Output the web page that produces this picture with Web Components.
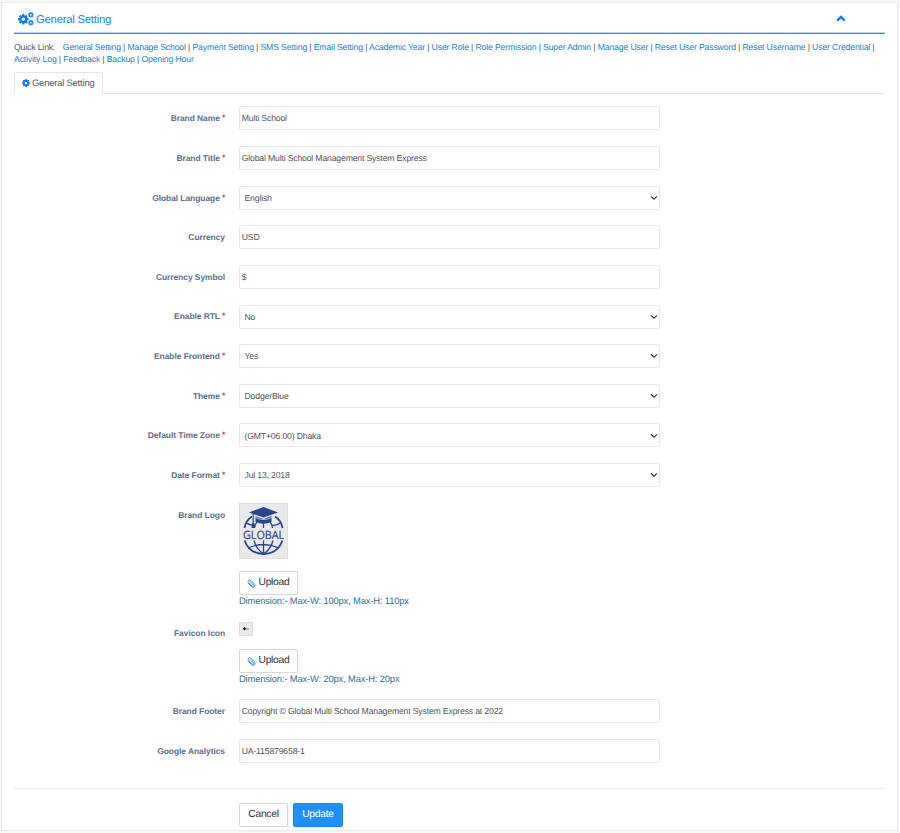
<!DOCTYPE html>
<html lang="en">
<head>
<meta charset="utf-8">
<title>General Setting</title>
<style>
html,body{margin:0;height:833px;overflow:hidden;background:#f7f7f7}
body{font-family:"Liberation Sans",Arial,sans-serif;font-size:8.700px;letter-spacing:-.18px;color:#555;text-rendering:geometricPrecision;box-sizing:border-box;padding:2px 2px 2px 1px}
</style>
</head>
<body>
<settings-page></settings-page>
<script>
const COG = 'M1152 896q0-106-75-181t-181-75-181 75-75 181 75 181 181 75 181-75 75-181zm512-109v222q0 12-8 23t-20 13l-185 28q-19 54-39 91 35 50 107 138 10 12 10 25t-9 23q-27 37-99 108t-94 71q-12 0-26-9l-138-108q-44 23-91 38-16 136-29 186-7 28-36 28h-222q-14 0-24.500-8.500t-11.500-21.500l-28-184q-49-16-90-37l-141 107q-10 9-25 9-14 0-25-11-126-114-165-168-7-10-7-23 0-12 8-23 15-21 51-66.500t54-70.500q-27-50-41-99l-183-27q-13-2-21-12.500t-8-23.500v-222q0-12 8-23t19-13l186-28q14-46 39-92-40-57-107-138-10-12-10-24 0-10 9-23 26-36 98.500-107.500t94.500-71.500q13 0 26 10l138 107q44-23 91-38 16-136 29-186 7-28 36-28h222q14 0 24.500 8.500t11.500 21.500l28 184q49 16 90 37l142-107q9-9 24-9 13 0 25 10 129 119 165 170 7 8 7 22 0 12-8 23-15 21-51 66.500t-54 70.500q26 50 41 98l183 28q13 2 21 12.500t8 23.500z';
const cogAt = (x, y, size) => `<path transform="translate(${x} ${y}) scale(${size / 1536}) translate(-128 -128)" d="${COG}"/>`;
const ICONS = {
  cog: [8, 8, `<g fill="#007bff">${cogAt(0, 0, 8)}</g>`],
  cogs: [16, 15, `<g fill="#007bff">${cogAt(0, 2, 10.6)}${cogAt(10, 0, 5.600)}${cogAt(10, 7.9, 5.600)}</g>`],
  up: [10, 7, '<path d="M1.2 5.6 5 1.9l3.8 3.7" fill="none" stroke="#007bff" stroke-width="2.2"/>'],
  down: [8, 6, '<path d="M1.1 1.400 4 4.200l2.900-2.800" fill="none" stroke="#333" stroke-width="1.25"/>'],
  clip: [9, 9, '<path d="M1.100 4.200 4.900 7.900Q6.200 9 7.500 7.800 8.700 6.500 7.600 5.200L3.700 1.200Q2.600.2 1.500 1.200.500 2.300 1.500 3.400L5.400 7.200Q6.100 7.700 6.600 7.200 7.100 6.600 6.500 6L3.200 2.700" fill="none" stroke="#2c80ff" stroke-width=".9" stroke-linecap="round"/>']
};
function define(name, css, html) {
  customElements.define(name, class extends HTMLElement {
    constructor() {
      super();
      this.attachShadow({ mode: 'open' }).innerHTML =
        `<style>${css}</style>` + (typeof html === 'function' ? html(this) : html);
    }
  });
}

define('ui-icon', ':host{display:inline-flex;flex:none}svg{display:block}', el => {
  const [w, h, body] = ICONS[el.getAttribute('name')];
  return `<svg width="${w}" height="${h}" viewBox="0 0 ${w} ${h}">${body}</svg>`;
});

define('panel-header', `
  :host{display:flex;align-items:center;height:31px;box-sizing:border-box;padding:3px 39px 0 4px;border-bottom:1px solid #1e8cff;box-shadow:inset 0 -1px #b5d9ff}
  h1{flex:1;margin:0 0 0 2px;font-size:11.300px;letter-spacing:-.23px;font-weight:400;color:#1a82fb;line-height:14px}
  .up{margin-top:-3px}`,
  '<ui-icon name="cogs"></ui-icon><h1><slot></slot></h1><ui-icon class="up" name="up"></ui-icon>');

define('quick-links', `
  :host{display:block;line-height:12.400px;padding-top:6.500px;font-size:8.700px;letter-spacing:-.155px;height:24.800px;color:#555}
  a{color:#1c7fc4}span{margin-right:7.500px}div{white-space:nowrap}`,
  el => {
    const line = s => s.split(',').map(t => `<a>${t}</a>`).join(' | ');
    return `<div><span>Quick Link:</span>${line(el.getAttribute('first'))} |</div><div>${line(el.getAttribute('second'))}</div>`;
  });

define('tab-bar', `
  :host{display:flex;height:22px;margin-top:6.700px;border-bottom:1px solid #e6e6e6;box-sizing:border-box}
  div{display:flex;align-items:center;gap:2px;box-sizing:border-box;width:89px;height:22px;padding:0 0 1px 7px;border:1px solid #e6e6e6;border-bottom:0;border-radius:3px 3px 0 0;background:#fff;font-size:9.400px;white-space:nowrap;color:#555}`,
  '<div><ui-icon name="cog"></ui-icon><slot></slot></div>');

define('form-row', `
  :host{display:grid;grid-template-columns:211px 421px;column-gap:14px;height:39.630px}
  label{font-weight:700;font-size:8.450px;letter-spacing:-.05px;color:#5b708b;text-align:right;line-height:12px;padding-top:var(--label-top,5.900px);white-space:nowrap}
  b{color:#f00;font-size:7.500px;font-weight:400;-webkit-text-stroke:.2px;display:inline-block;line-height:8px;transform:translateY(-1px)}`,
  el => `<label>${el.getAttribute('label')}${el.hasAttribute('required') ? ' <b>*</b>' : ''}</label><div><slot></slot></div>`);

define('text-field', `
  :host{display:flex;align-items:center;height:24px;box-sizing:border-box;border:1px solid #e8e8e8;border-radius:1.500px;padding:0 1.700px;color:#555;white-space:nowrap}`,
  '<slot></slot>');

define('select-field', `
  :host{display:flex;align-items:center;justify-content:space-between;height:24px;box-sizing:border-box;border:1px solid #e8e8e8;border-radius:1.500px;padding:.500px 1px 0 4.500px;color:#555;white-space:nowrap}`,
  '<span><slot></slot></span><ui-icon name="down"></ui-icon>');

define('ui-button', `
  :host{display:inline-flex;align-items:center;justify-content:center;gap:2px;width:var(--w,59px);height:24px;box-sizing:border-box;border:1px solid #d8d8d8;border-radius:2px;background:#fff;color:#333;font-size:10.300px;letter-spacing:-.27px;line-height:12px}
  :host([primary]){background:#1e90ff;border-color:#1e86ee;color:#fff}`,
  '<slot></slot>');

define('upload-hint', ':host{display:block;color:#35708e;font-size:9.350px;letter-spacing:-.14px;line-height:12px;margin-top:-.500px;white-space:nowrap}', '<slot></slot>');

define('brand-logo', ':host{display:block;width:49px;height:56px}svg{display:block}', `
  <svg width="49" height="56" viewBox="0 0 49 56">
    <rect x=".5" y=".5" width="48" height="55" fill="#e9e9e9" stroke="#dfdfdf"/>
    <g fill="none" stroke="#27468f" stroke-width="1.300">
      <path d="M5.500 25Q7 17 13 13.500M43.500 25Q42 17 36 13.500M5.600 37.500Q10 50.500 24.500 51 39 50.500 43.400 37.500" stroke-width="1.800"/>
      <path d="M24.500 19V25M24.500 37.500V51M15.500 25Q16 21 18 19M33.500 25Q33 21 31 19M15 37.500Q17 46 24.500 51 32 46 34 37.500M9 45Q24.500 38 40 45M8 20Q10 22 16 22.500M41 20Q39 22 33 22.500"/>
    </g>
    <path d="M10 9.500 24.500 4 39 9.500 24.500 14.500Z" fill="#27468f"/>
    <path d="M16.500 13.200 24.500 16 32.500 13V19Q24.500 22.500 16.500 19Z" fill="#27468f"/>
    <path d="M16.500 14.500Q24.500 18.500 32.500 14.500" fill="none" stroke="#e9e9e9" stroke-width=".8"/>
    <path d="M14.200 11V23.500" stroke="#27468f" stroke-width="1.200"/>
    <path d="M12.500 25 13.200 20h2l.7 5z" fill="#27468f"/>
    <text x="24.500" y="35.500" text-anchor="middle" textLength="41" lengthAdjust="spacingAndGlyphs" font-family="Open Sans, sans-serif" font-size="11.500" letter-spacing="0" fill="#27468f" stroke="#27468f" stroke-width=".2">GLOBAL</text>
  </svg>`);

define('favicon-preview', ':host{display:block;width:14px;height:14px}svg{display:block}', `
  <svg width="14" height="14" viewBox="0 0 14 14"><rect x=".5" y=".5" width="13" height="13" fill="#e9e9e9" stroke="#dedede"/><path d="m3.800 6.800 1.700-1.700 1.700 1.700-1.700 1.700z" fill="#111"/><path d="M7 7h3" stroke="#777" stroke-width=".8"/></svg>`);

define('settings-page', `
  :host{display:block;height:829px;box-sizing:border-box;background:#fff;border:1px solid #ebebeb;padding:0 12px}
  form{display:block;padding-top:12.400px}
  .logo{height:119px;--label-top:6px}
  .fav{height:77.500px;--label-top:5.600px}
  .logo ui-button{margin-top:12.500px}
  .fav favicon-preview{padding-top:.2px}
  .fav ui-button{margin-top:13.200px}
  ui-button{display:flex}
  hr{border:0;border-top:1px solid #ebebeb;margin:10px 0 14px}
  footer{display:flex;gap:5px;padding-left:225px}`, `
  <panel-header>General Setting</panel-header>
  <quick-links first="General Setting,Manage School,Payment Setting,SMS Setting,Email Setting,Academic Year,User Role,Role Permission,Super Admin,Manage User,Reset User Password,Reset Username,User Credential" second="Activity Log,Feedback,Backup,Opening Hour"></quick-links>
  <tab-bar>General Setting</tab-bar>
  <form>
    <form-row label="Brand Name" required><text-field>Multi School</text-field></form-row>
    <form-row label="Brand Title" required><text-field>Global Multi School Management System Express</text-field></form-row>
    <form-row label="Global Language" required><select-field>English</select-field></form-row>
    <form-row label="Currency"><text-field>USD</text-field></form-row>
    <form-row label="Currency Symbol"><text-field>$</text-field></form-row>
    <form-row label="Enable RTL" required><select-field>No</select-field></form-row>
    <form-row label="Enable Frontend" required><select-field>Yes</select-field></form-row>
    <form-row label="Theme" required><select-field>DodgerBlue</select-field></form-row>
    <form-row label="Default Time Zone" required><select-field>(GMT+06:00) Dhaka</select-field></form-row>
    <form-row label="Date Format" required><select-field>Jul 13, 2018</select-field></form-row>
    <form-row class="logo" label="Brand Logo"><brand-logo></brand-logo><ui-button><ui-icon name="clip"></ui-icon>Upload</ui-button><upload-hint>Dimension:- Max-W: 100px, Max-H: 110px</upload-hint></form-row>
    <form-row class="fav" label="Favicon Icon"><favicon-preview></favicon-preview><ui-button><ui-icon name="clip"></ui-icon>Upload</ui-button><upload-hint>Dimension:- Max-W: 20px, Max-H: 20px</upload-hint></form-row>
    <form-row label="Brand Footer"><text-field>Copyright © Global Multi School Management System Express at 2022</text-field></form-row>
    <form-row label="Google Analytics"><text-field>UA-115879658-1</text-field></form-row>
  </form>
  <hr>
  <footer><ui-button style="--w:49px">Cancel</ui-button><ui-button primary style="--w:50px">Update</ui-button></footer>`);
</script>
</body>
</html>
